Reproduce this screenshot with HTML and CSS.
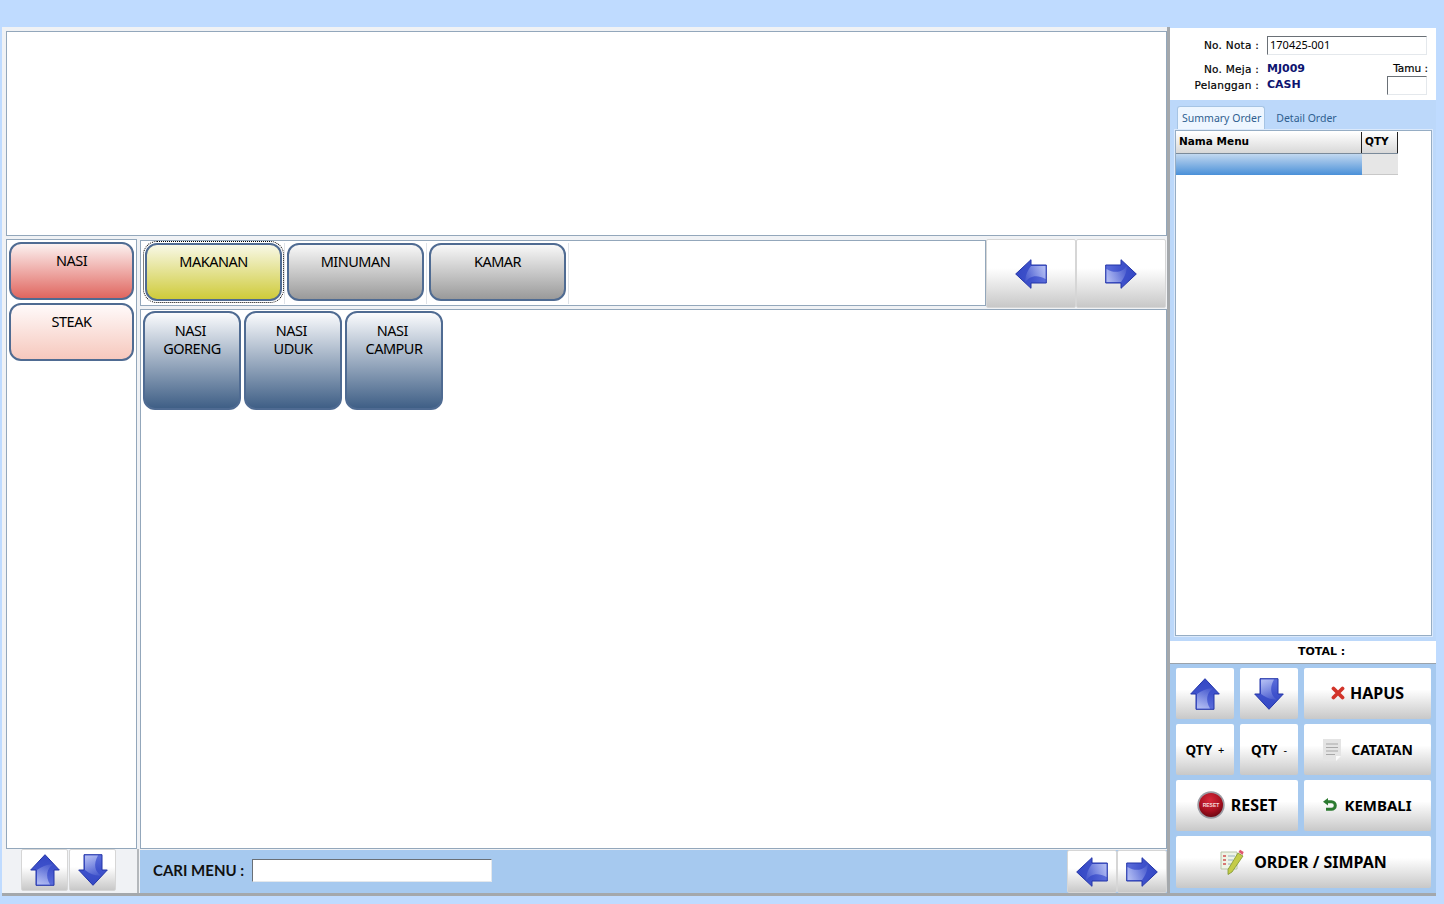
FILE: index.html
```html
<!DOCTYPE html>
<html lang="en">
<head>
  <meta charset="UTF-8" />
  <title>Order Menu</title>
  <link rel="stylesheet" href="styles.css">
</head>
<body>
  <svg class="defs" width="0" height="0">
    <defs>
      <linearGradient id="arrowFill" x1="0" y1="0" x2="0" y2="1">
        <stop offset="0" stop-color="#3448c4" />
        <stop offset="0.5" stop-color="#3f52cc" />
        <stop offset="1" stop-color="#5c6edb" />
      </linearGradient>
      <linearGradient id="arrowGloss" x1="0.7" y1="0" x2="0.3" y2="1">
        <stop offset="0" stop-color="#a8b4f0" stop-opacity="0.15" />
        <stop offset="1" stop-color="#b8c2f4" stop-opacity="0.9" />
      </linearGradient>
      <radialGradient id="resetFill" cx="0.45" cy="0.3" r="0.75">
        <stop offset="0" stop-color="#d8283a" />
        <stop offset="0.6" stop-color="#a81020" />
        <stop offset="1" stop-color="#640610" />
      </radialGradient>
      <symbol id="arrow" viewBox="0 0 30 32">
        <path d="M15 .7 29.300 16H24V31.300H6V16H.7Z" fill="url(#arrowFill)" stroke="#2234a8" />
        <path d="M7 30.500V16C12 12 18 10 23 10.500 17 14 15 22 20 30.500Z" fill="url(#arrowGloss)" />
      </symbol>
    </defs>
  </svg>

  <div class="window">
    <div class="main">
      <div class="preview"></div>

      <div class="browse">
        <div class="cats">
          <button class="cat cat-on">NASI</button>
          <button class="cat cat-off">STEAK</button>
        </div>
        <div class="menu">
          <div class="menu-top">
            <div class="tabstrip">
              <div class="tabcell"><button class="group group-on">MAKANAN</button></div>
              <div class="tabcell"><button class="group">MINUMAN</button></div>
              <div class="tabcell"><button class="group">KAMAR</button></div>
            </div>
            <div class="menu-nav">
              <button class="tool"><svg class="arrow to-left"><use href="#arrow" /></svg></button>
              <button class="tool"><svg class="arrow to-right"><use href="#arrow" /></svg></button>
            </div>
          </div>
          <div class="items">
            <button class="item">NASI&nbsp;<br>GORENG</button>
            <button class="item">NASI&nbsp;<br>UDUK</button>
            <button class="item">NASI&nbsp;<br>CAMPUR</button>
          </div>
        </div>
      </div>

      <div class="foot">
        <div class="foot-left">
          <button class="tool"><svg class="arrow"><use href="#arrow" /></svg></button>
          <button class="tool"><svg class="arrow to-down"><use href="#arrow" /></svg></button>
        </div>
        <div class="search">
          <label class="search-label" for="cari">CARI MENU :</label>
          <input class="field search-input" id="cari" type="text">
          <div class="search-nav">
            <button class="tool"><svg class="arrow to-left"><use href="#arrow" /></svg></button>
            <button class="tool"><svg class="arrow to-right"><use href="#arrow" /></svg></button>
          </div>
        </div>
      </div>
    </div>

    <div class="side">
      <div class="info">
        <div class="info-row">
          <span class="info-label info-label-top">No. Nota :</span>
          <input class="field nota-input" type="text" value="170425-001">
        </div>
        <div class="info-bottom">
          <div class="info-list">
            <div class="info-row"><span class="info-label">No. Meja :</span><span class="info-value">MJ009</span></div>
            <div class="info-row"><span class="info-label">Pelanggan :</span><span class="info-value">CASH</span></div>
          </div>
          <div class="tamu">
            <span class="tamu-label">Tamu :</span>
            <input class="field tamu-input" type="text">
          </div>
        </div>
      </div>

      <div class="order">
        <div class="order-tabs">
          <span class="order-tab order-tab-on">Summary Order</span>
          <span class="order-tab">Detail Order</span>
        </div>
        <div class="grid-box">
          <div class="grid-head">
            <span class="grid-name">Nama Menu</span>
            <span class="grid-qty">QTY</span>
          </div>
          <div class="grid-row">
            <span class="row-name"></span>
            <span class="row-qty"></span>
          </div>
        </div>
      </div>

      <div class="total">TOTAL :</div>

      <div class="actions">
        <button class="tool act"><svg class="arrow"><use href="#arrow" /></svg></button>
        <button class="tool act"><svg class="arrow to-down"><use href="#arrow" /></svg></button>
        <button class="tool act act-big">
          <svg class="ic" width="14" height="14" viewBox="0 0 14 14"><path d="M2.500 2.500 11.500 11.500M11.500 2.500 2.500 11.500" stroke="#d2342a" stroke-width="3.800" stroke-linecap="round" /></svg>
          HAPUS
        </button>
        <button class="tool act act-small">QTY <small>+</small></button>
        <button class="tool act act-small">QTY <small>-</small></button>
        <button class="tool act act-small act-note">
          <svg class="ic" width="20" height="24" viewBox="0 0 20 24">
            <path d="M1 1H19V18L14 23H1Z" fill="#e4e4e4" />
            <path d="M4 6H16M4 9.500H16M4 13H16M4 16.500H13" stroke="#a8a8a8" />
            <path d="M14 23V18H19Z" fill="#fafafa" />
          </svg>
          CATATAN
        </button>
        <button class="tool act act-big act-wide">
          <svg class="ic" width="28" height="28" viewBox="0 0 28 28">
            <circle cx="14" cy="14" r="13.700" fill="#9a9aa2" />
            <circle cx="14" cy="14" r="12" fill="url(#resetFill)" />
            <text class="reset-text" x="14" y="15.500" text-anchor="middle">RESET</text>
          </svg>
          RESET
        </button>
        <button class="tool act act-big act-back">
          <svg class="ic" width="15" height="14" viewBox="0 0 15 14">
            <path d="M4 3.700H8.500A3.800 3.800 0 0 1 8.500 11.300H3" fill="none" stroke="#2c7a30" stroke-width="3" />
            <path d="M0 3.700 5 0V7.400Z" fill="#2c7a30" />
          </svg>
          KEMBALI
        </button>
        <button class="tool act act-big act-full">
          <svg class="ic" width="24" height="26" viewBox="0 0 24 26">
            <path d="M1 3H17V20H1Z" fill="#eef4e6" stroke="#b8c4a8" />
            <path d="M3 7H6M3 11H6M3 15H6" stroke="#d05050" stroke-width="1.500" />
            <path d="M8 7H15M8 11H13M8 15H11" stroke="#9ab0c0" />
            <path d="M18 4 23 7 12 23 8 25.500 8 20.500Z" fill="#c4cc48" stroke="#7e9430" stroke-width=".8" />
            <path d="M18.500 3 20 .7 23.700 3 22.500 6Z" fill="#e05a70" />
          </svg>
          ORDER / SIMPAN
        </button>
      </div>
    </div>
  </div>
</body>
</html>
```

FILE: styles.css
```css
body {
  margin: 0;
  height: 904px;
  overflow: hidden;
  background-color: #bfdbff;
  font-family: "Noto Sans", sans-serif;
  color: #000;
}

button {
  font-family: inherit;
  color: inherit;
  cursor: pointer;
}

.defs {
  display: block;
  height: 0;
}

.window {
  display: flex;
  padding: 27px 0 0 2px;
}

.main {
  box-sizing: border-box;
  width: 1168px;
  height: 869px;
  padding: 4px 0 0 4px;
  background-color: #f0f2f5;
  border-right: 3px solid #a4a8ac;
  border-bottom: 3px solid #a4a8ac;
}

.preview {
  box-sizing: border-box;
  height: 205px;
  background-color: #fff;
  border: 1px solid #93a7bb;
}

.browse {
  display: flex;
  gap: 3px;
  height: 610px;
  margin-top: 3px;
}

.cats {
  box-sizing: border-box;
  display: flex;
  flex-direction: column;
  gap: 3px;
  width: 131px;
  padding: 2px;
  background-color: #fff;
  border: 1px solid #93a7bb;
}

.cat,
.group,
.item {
  box-sizing: border-box;
  padding: 0;
  border: 2px solid #4f6b92;
  border-radius: 12px;
  font-size: 14.500px;
  letter-spacing: -0.5px;
  line-height: 18px;
  text-align: center;
}

.cat {
  display: block;
  width: 125px;
  height: 58px;
  padding-bottom: 23px;
}

.cat-on {
  background: linear-gradient(#fcf1f0, #e0665f);
}

.cat-off {
  background: linear-gradient(#fffafa, #f6c8bd);
}

.menu {
  flex: 1;
  display: flex;
  flex-direction: column;
}

.menu-top {
  display: flex;
  height: 69px;
}

.tabstrip {
  box-sizing: border-box;
  display: flex;
  width: 846px;
  height: 66px;
  margin-top: 1px;
  padding: 2px 0 0 2px;
  background-color: #fff;
  border: 1px solid #93a7bb;
}

.tabcell {
  display: flex;
  width: 137px;
  height: 61px;
  padding-left: 2px;
  padding-right: 2px;
  border-right: 1px solid #dfe3e8;
}

.group {
  width: 137px;
  height: 58px;
  padding-bottom: 23px;
  background: linear-gradient(#f8f8f8, #9a9a9a);
}

.group-on {
  background: linear-gradient(#f8f8e6, #cfcb3a);
  outline: 1px dotted #000;
  outline-offset: 1px;
}

.menu-nav {
  display: flex;
}

.menu-nav .tool {
  width: 90px;
  height: 69px;
}

.tool {
  display: flex;
  align-items: center;
  justify-content: center;
  box-sizing: border-box;
  padding: 0;
  background: linear-gradient(#fff 42%, #c8c8c8);
  border: 1px solid #d6d6d6;
  border-radius: 2px;
}

.arrow {
  width: 30px;
  height: 32px;
}

.to-left {
  transform: rotate(-90deg) scaleX(-1);
}

.to-right {
  transform: rotate(90deg) scaleX(-1);
}

.to-down {
  transform: scaleY(-1);
}

.items {
  box-sizing: border-box;
  flex: 1;
  display: flex;
  align-items: flex-start;
  gap: 3px;
  margin-top: 1px;
  padding: 1px 2px;
  background-color: #fff;
  border: 1px solid #93a7bb;
}

.item {
  width: 98px;
  height: 99px;
  padding-bottom: 43px;
  background: linear-gradient(#fafbfd, #3f5f86);
}

.foot {
  display: flex;
  gap: 1px;
  height: 44px;
}

.foot-left {
  box-sizing: border-box;
  display: flex;
  gap: 1px;
  width: 133px;
  padding-left: 15px;
  border-right: 2px solid #b4b8bc;
}

.foot-left .tool {
  width: 47px;
  height: 42px;
}

.search {
  flex: 1;
  display: flex;
  align-items: center;
  height: 43px;
  margin-top: 1px;
  padding-left: 13px;
  background-color: #a6c9ef;
}

.search-label {
  margin-bottom: 4px;
  font-family: Lato, sans-serif;
  font-size: 15px;
  font-weight: 700;
  color: #111;
}

.field {
  box-sizing: border-box;
  padding: 0 2px;
  background-color: #fff;
  border: 1px solid #e4e8ec;
  border-top: 1px solid #6a7076;
  border-left: 1px solid #6a7076;
  outline: none;
  border-radius: 0;
}

.search-input {
  width: 240px;
  height: 23px;
  margin-left: 8px;
  margin-bottom: 2px;
}

.search-nav {
  display: flex;
  margin-left: auto;
  height: 43px;
}

.search-nav .tool {
  width: 50px;
  height: 43px;
}

.side {
  box-sizing: border-box;
  display: flex;
  flex-direction: column;
  width: 266px;
  height: 868px;
  margin-top: 1px;
  background-color: #bcd8fa;
  border-bottom: 3px solid #a4a8ac;
}

.info {
  box-sizing: border-box;
  height: 72px;
  padding-top: 8px;
  background-color: #fff;
  font-family: "DejaVu Sans", sans-serif;
  font-size: 10px;
}

.info-row {
  display: flex;
  align-items: center;
}

.info-label {
  width: 89px;
  margin-right: 8px;
  font-size: 10.500px;
  letter-spacing: 0.25px;
  -webkit-text-stroke: 0.2px #000;
  text-align: right;
}

.info-label-top {
  margin-bottom: 2px;
}

.nota-input {
  width: 160px;
  height: 19px;
  padding-bottom: 2px;
  font-family: "Noto Sans", sans-serif;
  font-size: 11px;
}

.info-bottom {
  display: flex;
  justify-content: space-between;
  padding-right: 8px;
  margin-top: 5px;
}

.info-list {
  display: flex;
  flex-direction: column;
  gap: 1px;
  padding-top: 1px;
}

.info-list .info-row {
  height: 15px;
}

.info-value {
  font-size: 11px;
  font-weight: 700;
  color: #0e1470;
}

.tamu {
  display: flex;
  flex-direction: column;
  align-items: flex-end;
}

.tamu-label {
  font-size: 10.500px;
  line-height: 16px;
  -webkit-text-stroke: 0.2px #000;
}

.tamu-input {
  width: 40px;
  height: 19px;
  margin-right: 1px;
}

.order {
  box-sizing: border-box;
  height: 541px;
  padding: 6px 4px 3px 5px;
}

.order-tabs {
  display: flex;
  align-items: flex-end;
  height: 23px;
  margin-bottom: 1px;
  padding-left: 2px;
}

.order-tab {
  padding: 0 10px 1px 5px;
  font-size: 10.500px;
  line-height: 20px;
  color: #2f5f90;
}

.order-tab-on {
  box-sizing: border-box;
  height: 23px;
  padding: 0 3px 0 4px;
  margin-right: 6px;
  line-height: 22px;
  background-color: #eef6ff;
  border: 1px solid #a6c4e4;
  border-bottom: none;
  border-radius: 3px 3px 0 0;
}

.grid-box {
  box-sizing: border-box;
  height: 506px;
  padding: 1px 0 0 0;
  background-color: #fff;
  border: 1px solid #96adc4;
  outline: 1px solid #dbe9fb;
}

.grid-head {
  display: flex;
  height: 21px;
  width: 222px;
  background: linear-gradient(#fff, #d8d8d8);
  border-bottom: 1px solid #7a8a9a;
  font-family: "DejaVu Sans", sans-serif;
  font-size: 10.500px;
  font-weight: 700;
  line-height: 18px;
}

.grid-name {
  box-sizing: border-box;
  width: 186px;
  padding-left: 3px;
  border-right: 1px solid #222;
}

.grid-qty {
  box-sizing: border-box;
  width: 36px;
  padding-left: 3px;
  border-right: 1px solid #222;
}

.grid-row {
  display: flex;
  height: 21px;
  width: 222px;
}

.row-name {
  width: 186px;
  background: linear-gradient(#c2d8f0, #4a90d8);
}

.row-qty {
  box-sizing: border-box;
  width: 36px;
  background-color: #e6e6e6;
  border-bottom: 1px solid #c8c8c8;
}

.total {
  box-sizing: border-box;
  height: 23px;
  padding-left: 128px;
  background-color: #fff;
  border-bottom: 1px solid #9aa2aa;
  font-family: "DejaVu Sans", sans-serif;
  font-size: 11px;
  font-weight: 700;
  line-height: 22px;
}

.actions {
  flex: 1;
  display: grid;
  grid-template-columns: 58px 58px 127px;
  grid-template-rows: 51px 51px 51px 52px;
  gap: 5px 6px;
  padding: 4px 0 0 6px;
  background-color: #a6c9ef;
}

.act {
  gap: 5px;
  font-size: 15px;
  font-weight: 700;
  border: none;
}

.act-big {
  padding-bottom: 2px;
  font-size: 16px;
}

.act-back {
  gap: 6px;
  font-size: 15px;
}

.act-small {
  font-size: 13.500px;
}

.act-small small {
  margin-left: 1px;
  font-size: 11px;
  font-weight: 400;
}

.act-note {
  gap: 9px;
  font-size: 14px;
}

.act-wide {
  grid-column: span 2;
  gap: 6px;
}

.act-full {
  grid-column: span 3;
  gap: 10px;
  padding-bottom: 1px;
}

.reset-text {
  font-family: "Liberation Sans", sans-serif;
  font-size: 5px;
  font-weight: 700;
  fill: #f5dcdc;
}
```
